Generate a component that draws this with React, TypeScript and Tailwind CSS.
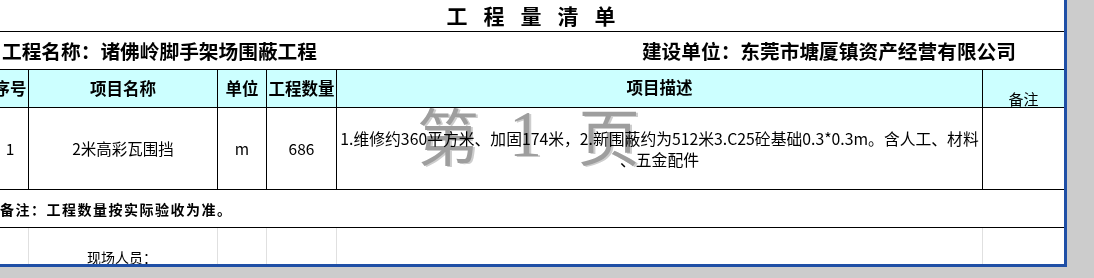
import React from 'react';

const cols = 'grid grid-cols-[37px_189px_49px_70px_646px_81px]';

export default function App() {
  return (
    <div className="w-[1094px] h-[278px] bg-[#cccccc] overflow-hidden font-['Noto_Sans_CJK_SC','Noto_Sans',sans-serif] text-black">
      <div className="relative w-[1067px] h-[267px] bg-white border-r-[3px] border-b-[3px] border-[#1f4fa6] overflow-hidden">
        <div className="-ml-[8px] w-[1072px]">
          {/* title */}
          <div className="h-[32px] border-b border-black flex items-center justify-center gap-[16px] text-[21px] font-bold leading-none pl-[6px]">
            {['工', '程', '量', '清', '单'].map(c => (
              <span key={c}>{c}</span>
            ))}
          </div>

          {/* project / client */}
          <div className="h-[38px] border-b border-black flex items-center justify-between pl-[10px] pr-[48px] text-[19.7px] font-bold leading-none">
            <span>工程名称：诸佛岭脚手架场围蔽工程</span>
            <span>建设单位：东莞市塘厦镇资产经营有限公司</span>
          </div>

          {/* header */}
          <div className={`${cols} h-[38px] bg-[#ccffff] border-b border-black text-[16.5px] font-bold leading-none`}>
            <div className="border-r border-black flex items-center justify-center whitespace-nowrap">序号</div>
            <div className="border-r border-black flex items-center justify-center">项目名称</div>
            <div className="border-r border-black flex items-center justify-center">单位</div>
            <div className="border-r border-black flex items-center justify-center whitespace-nowrap">工程数量</div>
            <div className="border-r border-black flex items-center justify-center pb-[2px]">项目描述</div>
            <div className="flex items-end justify-center font-normal text-[15px] pb-[1px]">备注</div>
          </div>

          {/* data row */}
          <div className={`${cols} h-[82px] border-b border-black text-[15.5px] leading-none`}>
            <div className="border-r border-black flex items-center justify-center">1</div>
            <div className="border-r border-black flex items-center justify-center">2米高彩瓦围挡</div>
            <div className="border-r border-black flex items-center justify-center">m</div>
            <div className="border-r border-black flex items-center justify-center">686</div>
            <div className="relative z-10 border-r border-black flex items-center justify-center text-center text-[15.8px] leading-[21px] whitespace-nowrap">
              <div>
                1.维修约360平方米、加固174米，2.新围蔽约为512米3.C25砼基础0.3*0.3m。含人工、材料
                <br />
                、五金配件
              </div>
            </div>
            <div />
          </div>

          {/* remark */}
          <div className="h-[38px] border-b border-black flex items-center pl-[8px] text-[14px] font-bold tracking-[1.5px] leading-none">
            备注：工程数量按实际验收为准。
          </div>

          {/* signatures */}
          <div className={`${cols} h-[40px] text-[14px] leading-none`}>
            <div className="border-r border-[#e0e0e0]" />
            <div className="border-r border-[#e0e0e0] pl-[58px] pt-[22px] whitespace-nowrap">现场人员：</div>
            <div className="border-r border-[#e0e0e0]" />
            <div className="border-r border-[#e0e0e0]" />
            <div className="border-r border-[#e0e0e0]" />
            <div />
          </div>
        </div>

        {/* page watermark */}
        <div className="absolute left-[417px] top-[103px] flex items-start text-[62px] leading-none text-[#9e9e9e] [text-shadow:2px_1px_0_#cdcdcd] mix-blend-multiply pointer-events-none select-none">
          <span>第</span>
          <span className="ml-[30px] font-['Liberation_Serif',serif] text-[66px] -mt-[2px]">1</span>
          <span className="ml-[36px]">页</span>
        </div>
      </div>
    </div>
  );
}
